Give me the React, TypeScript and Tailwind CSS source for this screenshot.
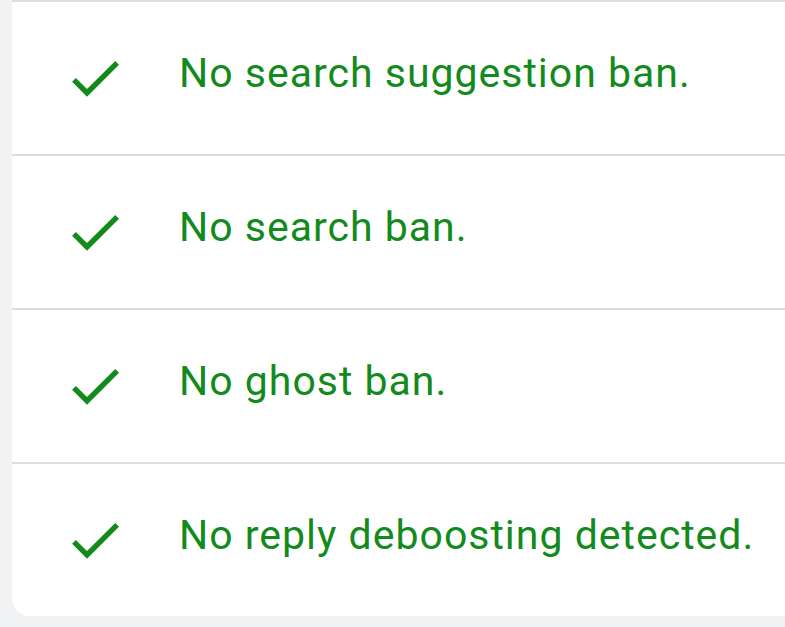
import React from "react";

interface CheckResult {
  id: string;
  label: string;
}

const results: CheckResult[] = [
  { id: "suggestion", label: "No search suggestion ban." },
  { id: "search", label: "No search ban." },
  { id: "ghost", label: "No ghost ban." },
  { id: "reply", label: "No reply deboosting detected." },
];

const CheckIcon: React.FC = () => (
  <svg
    width="64"
    height="64"
    viewBox="0 0 24 24"
    className="shrink-0 text-[#128a1c]"
    fill="currentColor"
  >
    <path d="M9 16.17 4.83 12l-1.42 1.41L9 19 21 7l-1.41-1.41z" />
  </svg>
);

const App: React.FC = () => {
  return (
    <div className="min-h-screen bg-[#f1f2f4] pl-[12px] font-['Roboto','Noto_Sans',sans-serif]">
      <div className="bg-white rounded-bl-[18px] overflow-hidden">
        {results.map((r) => (
          <div
            key={r.id}
            className="flex items-center h-[154px] border-t-2 border-[#dedede] pl-[51px]"
          >
            <CheckIcon />
            <span className="ml-[52px] mb-[10px] text-[41px] leading-none tracking-[1px] text-[#128a1c] whitespace-nowrap">
              {r.label}
            </span>
          </div>
        ))}
      </div>
    </div>
  );
};

export default App;
